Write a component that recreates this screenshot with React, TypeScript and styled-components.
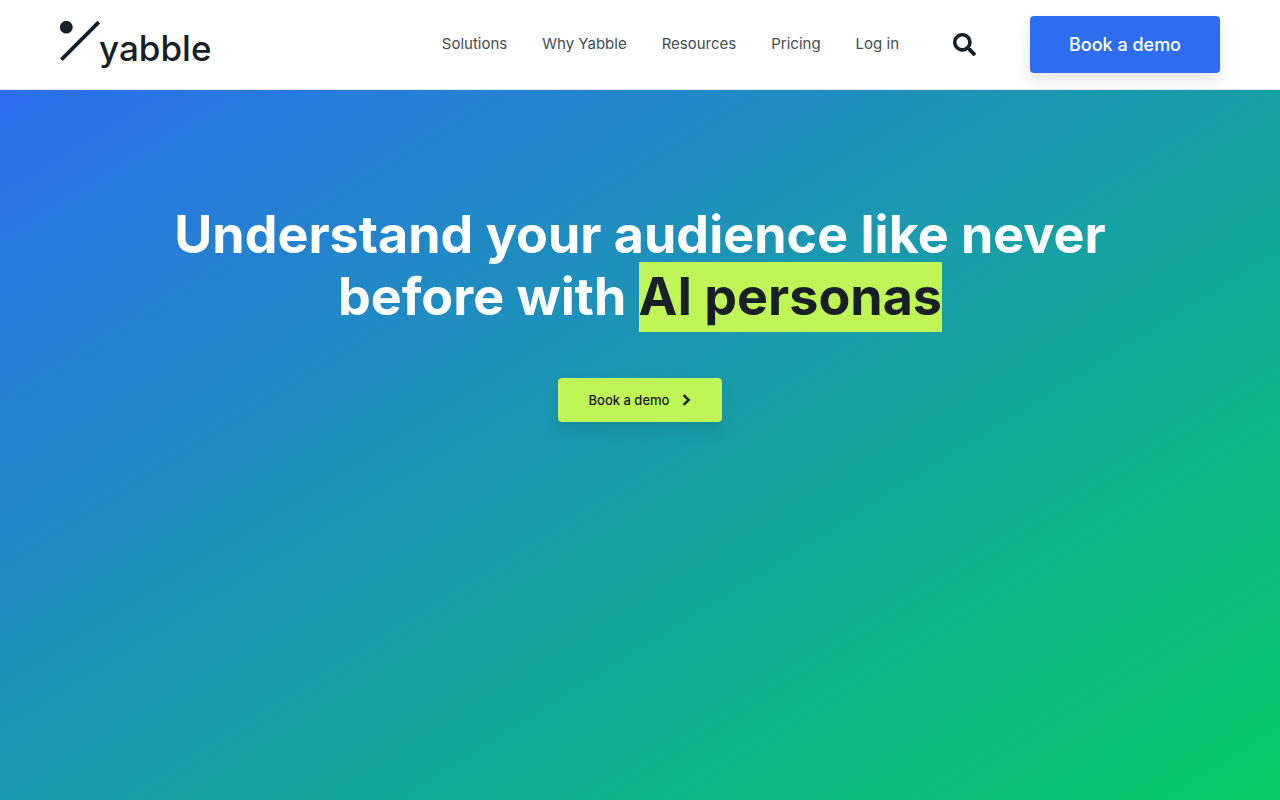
import React from "react";
import styled, { createGlobalStyle } from "styled-components";
import { FaSearch } from "react-icons/fa";

const ink = "#181f26";
const lime = "#c0f558";
const blue = "#2d6dee";

const GlobalStyle = createGlobalStyle`
  *, *::before, *::after { box-sizing: border-box; }
  body {
    margin: 0;
    color: ${ink};
    background: #fff;
    font-family: Inter, "Liberation Sans", Arial, sans-serif;
  }
`;

const Page = styled.div`
  min-height: 100vh;
  display: flex;
  flex-direction: column;
`;

const Header = styled.header`
  display: flex;
  align-items: center;
  justify-content: space-between;
  padding: 16px 60px;
  background: #fff;
  border-bottom: 1px solid #e6e8ec;
`;

const Logo = styled.a`
  display: flex;
  align-items: flex-start;
  color: ${ink};
  text-decoration: none;
`;

const LogoMark = styled.svg`
  display: block;
  width: 39px;
  height: 48px;
  overflow: visible;
`;

const Wordmark = styled.span`
  padding-top: 6px;
  font-size: 35px;
  font-weight: 500;
  line-height: 44px;
`;

const HeaderSide = styled.div`
  display: flex;
  align-items: center;
  gap: 54px;
`;

const Nav = styled.nav`
  display: flex;
  gap: 35px;
  padding-bottom: 2px;
`;

const NavLink = styled.a`
  color: #444b53;
  font-size: 15px;
  line-height: 24px;
  text-decoration: none;
  white-space: nowrap;
`;

const SearchButton = styled.button`
  display: flex;
  padding: 0;
  border: 0;
  background: none;
  color: ${ink};
  font-size: 23px;
  cursor: pointer;
`;

const ActionButton = styled.button<{ $tone: "primary" | "accent" }>`
  display: inline-flex;
  align-items: center;
  justify-content: center;
  gap: 12px;
  border: 0;
  border-radius: 4px;
  font-family: inherit;
  font-weight: 500;
  white-space: nowrap;
  cursor: pointer;
  box-shadow: 0 8px 16px rgba(0, 0, 0, 0.1);
  ${({ $tone }) =>
    $tone === "primary"
      ? `
    width: 190px;
    padding: 16px 0;
    font-size: 18px;
    line-height: 25px;
    color: #fff;
    background: ${blue};
  `
      : `
    width: 164px;
    padding: 12px 0;
    font-size: 13px;
    line-height: 20px;
    color: ${ink};
    background: ${lime};
  `}
`;

const Chevron = styled.svg`
  display: block;
  width: 10px;
  height: 12px;
`;

const Hero = styled.main`
  flex: 1;
  display: flex;
  flex-direction: column;
  align-items: center;
  gap: 50px;
  padding: 114px 60px 80px;
  background: linear-gradient(148deg, ${blue} 0%, #04cc66 100%);
`;

const Title = styled.h1`
  max-width: 980px;
  margin: 0;
  color: #fff;
  font-size: 52px;
  font-weight: 700;
  line-height: 62px;
  text-align: center;
`;

const Highlight = styled.mark`
  padding: 3px 0 4px;
  color: ${ink};
  background: ${lime};
`;

const links = ["Solutions", "Why Yabble", "Resources", "Pricing", "Log in"];

export default function App() {
  return (
    <Page>
      <GlobalStyle />
      <Header>
        <Logo href="#">
          <LogoMark viewBox="0 0 39 48" aria-hidden="true">
            <circle cx="6.3" cy="7.2" r="6.4" fill={ink} />
            <path d="M1.4 39.6 38.8 2.2" stroke={ink} strokeWidth="3.8" fill="none" />
          </LogoMark>
          <Wordmark>yabble</Wordmark>
        </Logo>
        <HeaderSide>
          <Nav aria-label="Main">
            {links.map((label) => (
              <NavLink key={label} href="#">
                {label}
              </NavLink>
            ))}
          </Nav>
          <SearchButton type="button" aria-label="Search">
            <FaSearch aria-hidden="true" />
          </SearchButton>
          <ActionButton type="button" $tone="primary">
            Book a demo
          </ActionButton>
        </HeaderSide>
      </Header>
      <Hero>
        <Title>
          Understand your audience like never before with <Highlight>AI personas</Highlight>
        </Title>
        <ActionButton type="button" $tone="accent">
          Book a demo
          <Chevron viewBox="0 0 10 12" aria-hidden="true">
            <path d="M2.6 1.2 7.6 6 2.6 10.8" fill="none" stroke={ink} strokeWidth="2.4" />
          </Chevron>
        </ActionButton>
      </Hero>
    </Page>
  );
}
